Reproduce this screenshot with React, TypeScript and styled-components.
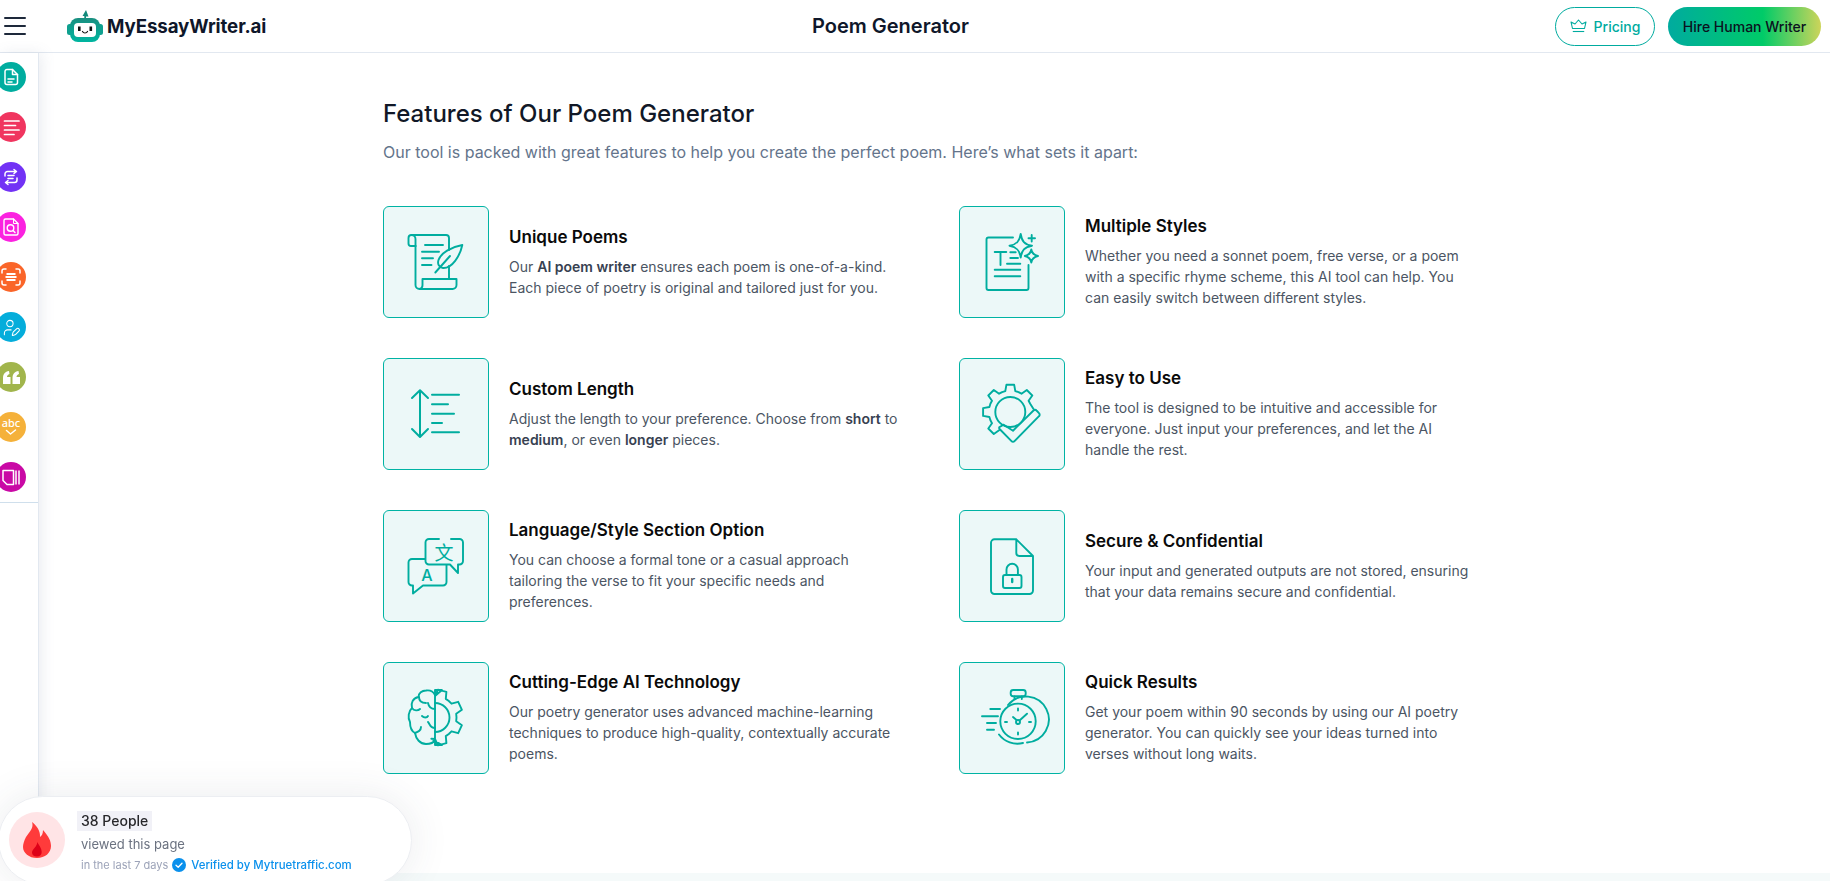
import { ReactNode } from "react";
import styled, { createGlobalStyle } from "styled-components";
import { UserPen } from "lucide-react";

const GlobalStyle = createGlobalStyle`
  html, body {
    margin: 0;
    padding: 0;
    background: #fff;
    overflow: hidden;
    font-family: Inter, "Noto Sans", sans-serif;
  }
  * { box-sizing: border-box; }
`;

const Page = styled.div`
  width: 1830px;
  height: 881px;
  display: flex;
  flex-direction: column;
`;

const Header = styled.header`
  height: 53px;
  flex: none;
  display: flex;
  align-items: center;
  border-bottom: 1px solid #e2e8f0;
  background: #fff;
`;

const HeaderLeft = styled.div`
  width: 812px;
  flex: none;
  display: flex;
  align-items: center;
`;

const Burger = styled.div`
  width: 22px;
  margin-left: 4px;
  display: flex;
  flex-direction: column;
  gap: 6px;
  span {
    display: block;
    height: 2px;
    border-radius: 1px;
    background: #1e293b;
  }
`;

const Logo = styled.div`
  margin-left: 41px;
  display: flex;
  align-items: center;
  gap: 4px;
`;

const LogoText = styled.span`
  font-size: 18.7px;
  font-weight: 700;
  color: #0f172a;
  letter-spacing: -0.1px;
`;

const PageTitle = styled.h1`
  margin: 0;
  font-size: 20px;
  font-weight: 600;
  color: #0f172a;
  flex: 1;
`;

const HeaderActions = styled.div`
  display: flex;
  align-items: center;
  gap: 13px;
  margin-right: 9px;
`;

const PricingButton = styled.button`
  width: 100px;
  height: 39px;
  display: flex;
  align-items: center;
  justify-content: center;
  gap: 7px;
  background: #fff;
  border: 1px solid #00ab9f;
  border-radius: 20px;
  color: #00ab9f;
  font: 500 14px Inter, sans-serif;
`;

const HireButton = styled.button`
  width: 153px;
  height: 39px;
  border: none;
  border-radius: 20px;
  background: linear-gradient(90deg, #00ab9f 0%, #00cb68 62%, #cdd45a 100%);
  color: #0b1220;
  font: 500 14px Inter, sans-serif;
`;

const Body = styled.div`
  flex: 1;
  display: flex;
  min-height: 0;
`;

const Sidebar = styled.aside`
  width: 39px;
  flex: none;
  border-right: 1px solid #e2e8f0;
  background: #fff;
  box-shadow: 3px 0 14px rgba(100, 116, 150, 0.13);
  position: relative;
`;

const SideList = styled.div`
  display: flex;
  flex-direction: column;
  gap: 20px;
  padding: 9px 0 10px;
  border-bottom: 1px solid #cfdfec;
`;

const SideCircle = styled.div<{ $bg: string }>`
  width: 30px;
  height: 30px;
  margin-left: -4px;
  border-radius: 50%;
  background: ${({ $bg }) => $bg};
  color: #fff;
  display: flex;
  align-items: center;
  justify-content: center;
`;

const Main = styled.main`
  flex: 1;
  min-width: 0;
  display: flex;
  flex-direction: column;
`;

const Content = styled.div`
  flex: 1;
  padding: 45px 0 0 344px;
`;

const Strip = styled.div`
  height: 8px;
  flex: none;
  background: #f5fafa;
`;

const Heading = styled.h2`
  margin: 0;
  font-size: 24px;
  line-height: 32px;
  font-weight: 500;
  color: #111827;
`;

const Subheading = styled.p`
  margin: 10px 0 0;
  font-size: 16px;
  line-height: 24px;
  color: #64748b;
`;

const FeatureGrid = styled.div`
  margin-top: 42px;
  display: grid;
  grid-template-columns: 556px 556px;
  grid-auto-rows: 112px;
  column-gap: 20px;
  row-gap: 40px;
`;

const Feature = styled.article`
  display: flex;
  align-items: center;
  gap: 20px;
`;

const IconBox = styled.div`
  width: 106px;
  height: 112px;
  flex: none;
  border: 1px solid #00b3a4;
  border-radius: 6px;
  background: #ecf8f8;
  svg {
    display: block;
    fill: none;
    stroke: #00ad9f;
    stroke-width: 1.9;
    stroke-linecap: round;
    stroke-linejoin: round;
  }
`;

const FeatureText = styled.div`
  width: 392px;
  padding-bottom: 2px;
`;

const FeatureTitle = styled.h3`
  margin: 0 0 7px;
  font-size: 17px;
  line-height: 24px;
  font-weight: 600;
  color: #0a0a0a;
`;

const FeatureBody = styled.p`
  margin: 0;
  font-size: 14px;
  line-height: 21px;
  color: #4b5563;
  b {
    font-weight: 600;
    color: #374151;
  }
`;

const Popup = styled.div`
  position: fixed;
  left: -2px;
  bottom: -4px;
  width: 414px;
  height: 89px;
  display: flex;
  align-items: center;
  gap: 12px;
  padding-left: 10px;
  background: #fff;
  border: 1px solid #eceef2;
  border-radius: 45px;
  box-shadow: 0 0 40px rgba(60, 70, 90, 0.1);
  z-index: 5;
`;

const FlameCircle = styled.div`
  width: 56px;
  height: 56px;
  flex: none;
  border-radius: 50%;
  background: #ffe4e6;
  display: flex;
  align-items: center;
  justify-content: center;
  margin-top: -2px;
`;

const PopupText = styled.div`
  display: flex;
  flex-direction: column;
  align-items: flex-start;
  margin-top: 3px;
`;

const PeopleTag = styled.span`
  padding: 0 4px;
  margin-bottom: 3px;
  height: 20px;
  line-height: 20px;
  background: #f1f1f7;
  font-size: 14px;
  font-weight: 500;
  color: #27272a;
`;

const Viewed = styled.span`
  margin-left: 4px;
  font-size: 13px;
  line-height: 20px;
  color: #6b7280;
`;

const MetaRow = styled.div`
  margin: 2px 0 0 4px;
  display: flex;
  align-items: center;
  gap: 4px;
`;

const Days = styled.span`
  font-size: 11px;
  line-height: 18px;
  color: #9ca3b8;
`;

const Verified = styled.span`
  margin-left: 1px;
  font-size: 11.4px;
  font-weight: 500;
  line-height: 18px;
  color: #0a90ec;
`;

const gearPath = (cx: number, cy: number, ro: number, ri: number, n: number, start: number, sweep: number) => {
  const pitch = sweep / n;
  const pt = (r: number, deg: number) => {
    const a = (deg * Math.PI) / 180;
    return `${(cx + r * Math.cos(a)).toFixed(1)} ${(cy + r * Math.sin(a)).toFixed(1)}`;
  };
  const parts: string[] = [];
  for (let i = 0; i < n; i++) {
    const a = start + i * pitch;
    parts.push(pt(ri, a), pt(ri, a + pitch * 0.2), pt(ro, a + pitch * 0.32), pt(ro, a + pitch * 0.68), pt(ri, a + pitch * 0.8));
  }
  return parts;
};

const BoxSvg = ({ children }: { children: ReactNode }) => (
  <svg width="104" height="110" viewBox="1 1 104 110">
    {children}
  </svg>
);

const ScrollIcon = () => (
  <BoxSvg>
    <path d="M32.5 40V79a4 4 0 0 0 4 4H69.5a4 4 0 0 0 4-4V73H39.5V79a4 4 0 0 1-3 4" />
    <path d="M32.5 40H28a2.5 2.5 0 0 1-2.5-2.5V32a3 3 0 0 1 3-3H63a3 3 0 0 1 3 3V44" />
    <path d="M28.5 29a4 4 0 0 1 4 4V40" />
    <path d="M42 39H60M39 45.7H56M39 52.3H50M39 59H48.5M66 60V73" />
    <path d="M79.3 39C68 41 58 47 55.5 54C54.2 58 56 61.5 60 62C69 62.5 77 50 79.3 39Z" />
    <path d="M52.3 66.5L67 50" />
  </BoxSvg>
);

const LengthIcon = () => (
  <BoxSvg>
    <g strokeWidth="2">
      <path d="M37 33V78M29 40L37 32.3L45 40M29 71L37 79L45 71" />
      <path d="M49 36.7H76M49 46.3H65M49 55.7H71M49 65H59M49 74.3H76" />
    </g>
  </BoxSvg>
);

const LanguageIcon = () => (
  <BoxSvg>
    <path d="M56 29H46a3.5 3.5 0 0 0-3.5 3.5V51a3.5 3.5 0 0 0 3.5 3.5H67L75 63V54.5H76.5a3.5 3.5 0 0 0 3.5-3.5V32.5a3.5 3.5 0 0 0-3.5-3.5H68" />
    <path d="M42 49H29a3.5 3.5 0 0 0-3.5 3.5V72a3.5 3.5 0 0 0 3.5 3.5H30V83.5L40 75.5H60a3.5 3.5 0 0 0 3.5-3.5V55" />
    <text x="61" y="50" textAnchor="middle" fontSize="19" fill="#00ad9f" stroke="none" fontFamily='"Noto Sans CJK SC", sans-serif'>
      文
    </text>
    <text x="44" y="71" textAnchor="middle" fontSize="16" fontWeight="500" fill="#00ad9f" stroke="none" fontFamily="Inter, sans-serif">
      A
    </text>
  </BoxSvg>
);

const BrainIcon = () => (
  <BoxSvg>
    <path d="M52 33C50 29 46 28 43 28.5C39 28.5 35.5 31 35.5 35C30 36 27.5 41 29 46C25.5 49 24.5 56 27 60C27 65 28 69 32 71C33 77 37 82 43 82C47 82 50.5 81 52 78" />
    <path d="M36 35C36 39 39 41 43 41M29 46C31 49 35 49 37 47M32 71C35 70 38 69 38 65M45 41C46 46 50 47 52 47M45 60C47 62 47 66 52 66M39 54C41 56 44 56 45 54" />
    <path d={`M52 28V83L59 83 ${gearPath(52, 55.5, 28, 21.5, 4, 100, -200).join(" L")} L59 28Z`} />
    <path d="M52 41A14.5 14.5 0 0 1 52 70" />
  </BoxSvg>
);

const StylesIcon = () => (
  <BoxSvg>
    <path d="M54 31.5H29.5a2 2 0 0 0-2 2V82a2 2 0 0 0 2 2H67.5a2 2 0 0 0 2-2V59" />
    <path d="M35.7 46H47.3M41.5 46V59M51.3 46.3H56.7M51.3 52H59M48 57.7H61.3M35.7 63.7H61.3M35.7 70.3H61.3" />
    <path d="M61.7 28C62.7 35 65.5 38.5 73 39.7C65.5 41 62.7 44.5 61.7 51.5C60.7 44.5 57.9 41 50.5 39.7C57.9 38.5 60.7 35 61.7 28Z" />
    <path d="M72.3 43.5C73 47.5 74.5 49.2 79 50C74.5 50.8 73 52.5 72.3 56.5C71.6 52.5 70 50.8 65.8 50C70 49.2 71.6 47.5 72.3 43.5Z" />
    <path d="M72.7 29V35.5M69.5 32.3H76" />
  </BoxSvg>
);

const GearCheckIcon = () => (
  <BoxSvg>
    <path d={`M74.5 51L${gearPath(51.3, 54, 27.5, 21.5, 5, -22.5, -225).join(" L")}`} />
    <path
      fill="#ecf8f8"
      d="M44.7 66.7L40.6 69a1.5 1.5 0 0 0 0 2L52.5 83.2a2 2 0 0 0 3 0L80 58.2a2 2 0 0 0 0-3L77.5 52.5a2 2 0 0 0-3 0L54 72.7Z"
    />
    <circle cx="51.3" cy="54" r="15" />
  </BoxSvg>
);

const SecureIcon = () => (
  <BoxSvg>
    <path d="M57.3 29.3H35.5a3.5 3.5 0 0 0-3.5 3.5V80.5a3.5 3.5 0 0 0 3.5 3.5H70.5a3.5 3.5 0 0 0 3.5-3.5V46L57.3 29.3V43a3 3 0 0 0 3 3H74" />
    <rect x="44" y="65" width="18.5" height="13" rx="2" />
    <path d="M47.5 65V59.5a5.7 5.7 0 0 1 11.4 0V65" />
    <path d="M53.2 69V72" strokeWidth="2.4" />
  </BoxSvg>
);

const WatchIcon = () => (
  <BoxSvg>
    <path d="M49 43A23 23 0 1 1 68 80.5" />
    <path d="M64 81A23 23 0 0 1 40 72.5" />
    <circle cx="59" cy="59.3" r="17.7" />
    <rect x="51.7" y="28" width="15" height="6.3" rx="2.5" />
    <path d="M55.5 34.5V37M62.8 34.5V37" />
    <circle cx="59" cy="60" r="2" />
    <path d="M60.5 58.5L68 51.7M57.5 58L54 55M59 46.5V48.5M59 70.5V72.5M46 60H48M70 60H72" />
    <path d="M23 54.3H39M31.3 47H41M28 61H37M28 67.7H35" />
  </BoxSvg>
);

const features = [
  { icon: <ScrollIcon />, title: "Unique Poems", body: <>Our <b>AI poem writer</b> ensures each poem is one-of-a-kind. Each piece of poetry is original and tailored just for you.</> },
  { icon: <StylesIcon />, title: "Multiple Styles", body: <>Whether you need a sonnet poem, free verse, or a poem with a specific rhyme scheme, this AI tool can help. You can easily switch between different styles.</> },
  { icon: <LengthIcon />, title: "Custom Length", body: <>Adjust the length to your preference. Choose from <b>short</b> to <b>medium</b>, or even <b>longer</b> pieces.</> },
  { icon: <GearCheckIcon />, title: "Easy to Use", body: <>The tool is designed to be intuitive and accessible for everyone. Just input your preferences, and let the AI handle the rest.</> },
  { icon: <LanguageIcon />, title: "Language/Style Section Option", body: <>You can choose a formal tone or a casual approach tailoring the verse to fit your specific needs and preferences.</> },
  { icon: <SecureIcon />, title: "Secure & Confidential", body: <>Your input and generated outputs are not stored, ensuring that your data remains secure and confidential.</> },
  { icon: <BrainIcon />, title: "Cutting-Edge AI Technology", body: <>Our poetry generator uses advanced machine-learning techniques to produce high-quality, contextually accurate poems.</> },
  { icon: <WatchIcon />, title: "Quick Results", body: <>Get your poem within 90 seconds by using our AI poetry generator. You can quickly see your ideas turned into verses without long waits.</> },
];

const DocLines = () => (
  <svg width="16" height="18" viewBox="0 0 16 18" fill="none" stroke="currentColor" strokeWidth="1.5" strokeLinecap="round" strokeLinejoin="round">
    <path d="M4 1.500H9.500L14.500 6.500V14.500a2 2 0 0 1-2 2H4a2 2 0 0 1-2-2V3.500a2 2 0 0 1 2-2Z" />
    <path d="M9.500 1.500V6.500H14.500" />
    <path d="M5 11H11M5 14H9" />
  </svg>
);

const TextLines = () => (
  <svg width="17" height="17" viewBox="0 0 17 17" fill="none" stroke="currentColor" strokeWidth="1.700" strokeLinecap="round">
    <path d="M1.500 2H16M1.500 6.500H12.500M1.500 11H16M1.500 15.500H11" />
  </svg>
);

const RepeatLines = () => (
  <svg width="18" height="18" viewBox="0 0 18 18" fill="none" stroke="currentColor" strokeWidth="1.500" strokeLinecap="round" strokeLinejoin="round">
    <path d="M3 8V6a2.500 2.500 0 0 1 2.500-2.500H14M12 1.500L14.500 3.500L12 5.500" />
    <path d="M15 10v2a2.500 2.500 0 0 1-2.500 2.500H4M6 12.500L3.500 14.500L6 16.500" />
    <path d="M6 7.500H12M6 10.500H11" />
  </svg>
);

const DocSearch = () => (
  <svg width="16" height="18" viewBox="0 0 16 18" fill="none" stroke="currentColor" strokeWidth="1.400" strokeLinecap="round" strokeLinejoin="round">
    <path d="M10.500 1H2.500a1.500 1.500 0 0 0-1.500 1.500V15.500A1.500 1.500 0 0 0 2.500 17H13.500a1.500 1.500 0 0 0 1.500-1.500V5.500Z" />
    <path d="M10.500 1V5.500H15" strokeWidth="1" />
    <circle cx="7.500" cy="10" r="3.300" />
    <path d="M10 12.500L12 14.500" />
  </svg>
);

const ScanStack = () => (
  <svg width="20" height="18" viewBox="0 0 20 18" fill="none" stroke="currentColor" strokeWidth="1.500" strokeLinecap="round" strokeLinejoin="round">
    <path d="M1 5V3a2 2 0 0 1 2-2H5M15 1H17a2 2 0 0 1 2 2V5M19 13V15a2 2 0 0 1-2 2H15M5 17H3a2 2 0 0 1-2-2V13" />
    <path d="M5.500 6H14.500M4.500 9H15.500M5.500 12H14.500" strokeWidth="2.200" strokeLinecap="butt" />
  </svg>
);

const QuoteMarks = () => (
  <svg width="17" height="13" viewBox="0 0 17 13" fill="currentColor">
    <path d="M0 13V7C0 3 2 .5 6 0L6.500 3C5 3.500 4 4.500 4 6H7.500V13Z" />
    <path d="M9.500 13V7C9.500 3 11.500 .5 15.500 0L16 3C14.500 3.500 13.500 4.500 13.500 6H17V13Z" />
  </svg>
);

const AbcCheck = () => (
  <svg width="22" height="22" viewBox="0 0 22 22" fill="none" stroke="currentColor" strokeWidth="1.500" strokeLinecap="round" strokeLinejoin="round">
    <text x="11" y="11" textAnchor="middle" fontSize="11" fontWeight="500" fill="currentColor" stroke="none" fontFamily="'Noto Sans', sans-serif">
      abc
    </text>
    <path d="M6.500 14.500L10.500 18L15.500 14" />
  </svg>
);

const Pages = () => (
  <svg width="18" height="17" viewBox="0 0 18 17" fill="none" stroke="currentColor" strokeWidth="1.500" strokeLinejoin="round">
    <path d="M1 1.500H11.500V15.500H5L1 11.500Z" />
    <path d="M14 1.500V15.500M17 1.500V15.500" />
  </svg>
);

const sideItems = [
  { bg: "#00ad9f", icon: <DocLines /> },
  { bg: "#f0355f", icon: <TextLines /> },
  { bg: "#7232f5", icon: <RepeatLines /> },
  { bg: "#fb22e0", icon: <DocSearch /> },
  { bg: "#fa6529", icon: <ScanStack /> },
  { bg: "#04addb", icon: <UserPen size={19} strokeWidth={1.3} /> },
  { bg: "#a1b54c", icon: <QuoteMarks /> },
  { bg: "#f5b13a", icon: <AbcCheck /> },
  { bg: "#c909a5", icon: <Pages /> },
];

const RobotLogo = () => (
  <svg width="36" height="32" viewBox="0 0 36 32">
    <defs>
      <linearGradient id="robotHead" x1="0" y1="0" x2="0" y2="1">
        <stop offset="0" stopColor="#1a8f80" />
        <stop offset="1" stopColor="#00b5a0" />
      </linearGradient>
    </defs>
    <path d="M19 0L15.500 6H17.300V10H19V6.500H21.500Z" fill="#128a7b" />
    <rect x="0" y="14" width="6" height="11" rx="2.500" fill="#0fa08f" />
    <rect x="30" y="14" width="6" height="11" rx="2.500" fill="#0fa08f" />
    <rect x="3" y="8" width="30" height="24" rx="8" fill="url(#robotHead)" />
    <rect x="7" y="13" width="22" height="14" rx="4" fill="#fff" />
    <rect x="11" y="16.500" width="2.600" height="4.500" fill="#111" />
    <rect x="22.500" y="16.500" width="2.600" height="4.500" fill="#111" />
    <path d="M15.500 21.500C16.500 23.500 19.500 23.500 20.500 21.500" fill="none" stroke="#111" strokeWidth="1.200" strokeLinecap="round" />
  </svg>
);

const Crown = () => (
  <svg width="17" height="14" viewBox="0 0 17 14" fill="none" stroke="#00ab9f" strokeWidth="1.100" strokeLinejoin="round">
    <path d="M2.500 9.500L1 3L5 5L8.500 1L12 5L16 3L14.500 9.500Z" />
    <path d="M2.800 12.500H14.200" />
  </svg>
);

const Flame = () => (
  <svg width="28" height="36" viewBox="0 0 28 36">
    <path d="M9 0C11 6 7 9 3 15C1 19 0 22 0 25C0 31 6 36 14 36C22 36 28 31 28 24C28 19 26 15 20 8C20 12 18.500 14 17 15C17.500 9 14 4 9 0Z" fill="#ff3b3b" />
    <path d="M14 20C15 24 9 27 9 30.500C9 33 11 34.500 14 34.500C17 34.500 18.700 32.500 18.700 30C18.700 26 16 23 14 20Z" fill="#de0018" />
  </svg>
);

const VerifiedBadge = () => (
  <svg width="14" height="14" viewBox="0 0 14 14">
    <circle cx="7" cy="7" r="7" fill="#0a90ec" />
    <path d="M4 7.200L6.200 9.300L10 5.200" fill="none" stroke="#fff" strokeWidth="1.300" strokeLinecap="round" strokeLinejoin="round" />
  </svg>
);

export default function App() {
  return (
    <Page>
      <GlobalStyle />
      <Header>
        <HeaderLeft>
          <Burger>
            <span />
            <span />
            <span />
          </Burger>
          <Logo>
            <RobotLogo />
            <LogoText>MyEssayWriter.ai</LogoText>
          </Logo>
        </HeaderLeft>
        <PageTitle>Poem Generator</PageTitle>
        <HeaderActions>
          <PricingButton>
            <Crown />
            Pricing
          </PricingButton>
          <HireButton>Hire Human Writer</HireButton>
        </HeaderActions>
      </Header>
      <Body>
        <Sidebar>
          <SideList>
            {sideItems.map((item) => (
              <SideCircle key={item.bg} $bg={item.bg}>
                {item.icon}
              </SideCircle>
            ))}
          </SideList>
        </Sidebar>
        <Main>
          <Content>
            <Heading>Features of Our Poem Generator</Heading>
            <Subheading>Our tool is packed with great features to help you create the perfect poem. Here’s what sets it apart:</Subheading>
            <FeatureGrid>
              {features.map((f) => (
                <Feature key={f.title}>
                  <IconBox>{f.icon}</IconBox>
                  <FeatureText>
                    <FeatureTitle>{f.title}</FeatureTitle>
                    <FeatureBody>{f.body}</FeatureBody>
                  </FeatureText>
                </Feature>
              ))}
            </FeatureGrid>
          </Content>
          <Strip />
        </Main>
      </Body>
      <Popup>
        <FlameCircle>
          <Flame />
        </FlameCircle>
        <PopupText>
          <PeopleTag>38 People</PeopleTag>
          <Viewed>viewed this page</Viewed>
          <MetaRow>
            <Days>in the last 7 days</Days>
            <VerifiedBadge />
            <Verified>Verified by Mytruetraffic.com</Verified>
          </MetaRow>
        </PopupText>
      </Popup>
    </Page>
  );
}
